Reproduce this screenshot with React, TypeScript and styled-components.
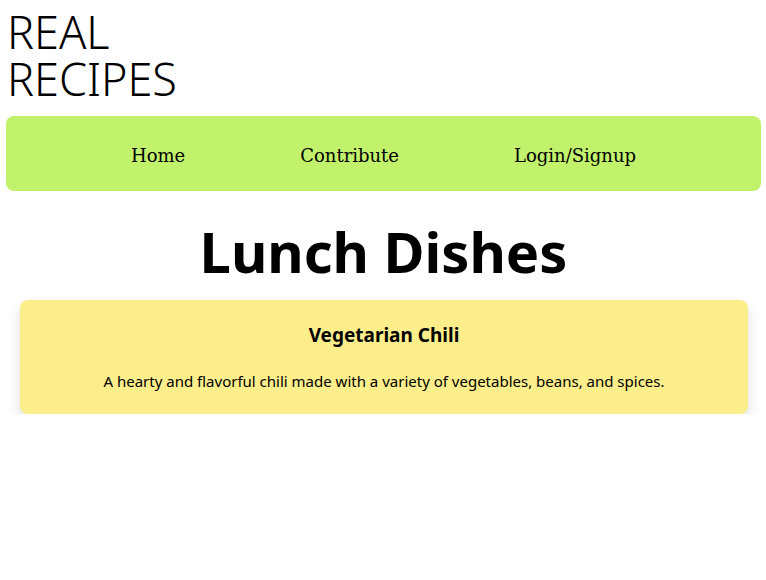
import React from "react";
import styled, { createGlobalStyle } from "styled-components";

const GlobalStyle = createGlobalStyle`
    body {
        margin: 0;
        background: #ffffff;
        font-family: "Noto Sans", "Open Sans", sans-serif;
        color: #000000;
    }
`;

const Page = styled.div`
    display: flex;
    flex-direction: column;
    padding: 8px 5px 0 6px;
`;

const SiteTitle = styled.h1`
    margin: 0 0 14px 1px;
    font-weight: 300;
    font-size: 45px;
    line-height: 47px;
    width: 200px;
`;

const NavBar = styled.nav`
    display: flex;
    justify-content: center;
    align-items: center;
    gap: 115px;
    height: 75px;
    padding-top: 3px;
    box-sizing: border-box;
    background-color: #c2f26b;
    border-radius: 8px;
`;

const NavLink = styled.a`
    font-family: "DejaVu Serif", Georgia, serif;
    font-size: 18px;
    color: #000000;
    text-decoration: none;
    cursor: pointer;
`;

const Heading = styled.h2`
    margin: 24px 0 13px;
    text-align: center;
    font-size: 56px;
    font-weight: 700;
    line-height: 72px;
`;

const Card = styled.div`
    margin: 0 13px 0 14px;
    padding: 22px 20px 23px;
    background-color: #fcee8a;
    border-radius: 8px;
    box-shadow: 0 6px 14px rgba(0, 0, 0, 0.13);
    text-align: center;
`;

const CardTitle = styled.h3`
    margin: 0 0 23px;
    font-size: 19px;
    font-weight: 700;
`;

const CardText = styled.p`
    margin: 0;
    font-size: 15px;
`;

export default function App() {
    return (
        <>
            <GlobalStyle />
            <Page>
                <SiteTitle>REAL RECIPES</SiteTitle>
                <NavBar>
                    <NavLink>Home</NavLink>
                    <NavLink>Contribute</NavLink>
                    <NavLink>Login/Signup</NavLink>
                </NavBar>
                <Heading>Lunch Dishes</Heading>
                <Card>
                    <CardTitle>Vegetarian Chili</CardTitle>
                    <CardText>A hearty and flavorful chili made with a variety of vegetables, beans, and spices.</CardText>
                </Card>
            </Page>
        </>
    );
}
